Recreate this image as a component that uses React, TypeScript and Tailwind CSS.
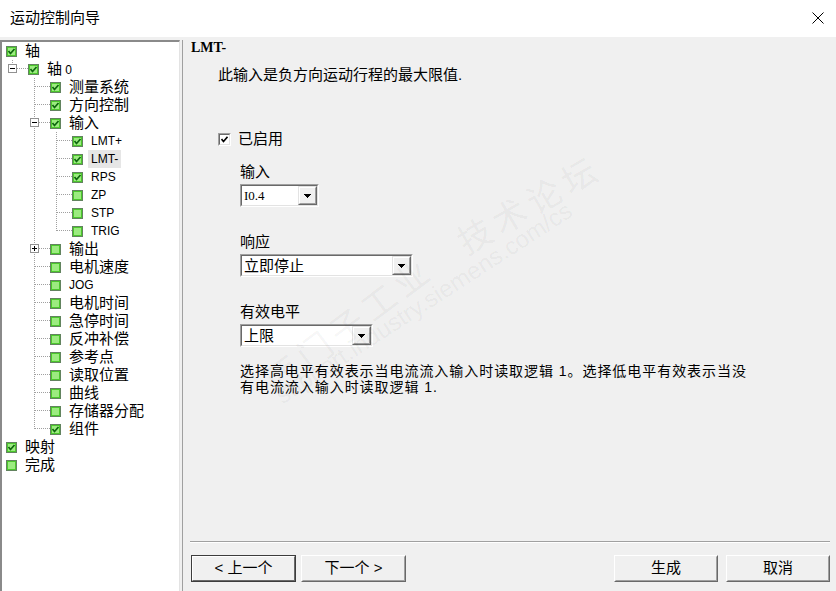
import React from "react"

type Guide = " " | "|" | "T" | "L"

type TreeRow = {
  label: React.ReactNode
  guides: Guide[]
  checked: boolean
  expander?: "-" | "+"
  latin?: boolean
  selected?: boolean
}

const rows: TreeRow[] = [
  { label: "轴", guides: [], checked: true },
  {
    label: (
      <>
        轴<span className="text-[12px]"> 0</span>
      </>
    ),
    guides: ["L"],
    checked: true,
    expander: "-",
  },
  { label: "测量系统", guides: [" ", "T"], checked: true },
  { label: "方向控制", guides: [" ", "T"], checked: true },
  { label: "输入", guides: [" ", "T"], checked: true, expander: "-" },
  { label: "LMT+", guides: [" ", "|", "T"], checked: true, latin: true },
  { label: "LMT-", guides: [" ", "|", "T"], checked: true, latin: true, selected: true },
  { label: "RPS", guides: [" ", "|", "T"], checked: true, latin: true },
  { label: "ZP", guides: [" ", "|", "T"], checked: false, latin: true },
  { label: "STP", guides: [" ", "|", "T"], checked: false, latin: true },
  { label: "TRIG", guides: [" ", "|", "L"], checked: false, latin: true },
  { label: "输出", guides: [" ", "T"], checked: false, expander: "+" },
  { label: "电机速度", guides: [" ", "T"], checked: false },
  { label: "JOG", guides: [" ", "T"], checked: false, latin: true },
  { label: "电机时间", guides: [" ", "T"], checked: false },
  { label: "急停时间", guides: [" ", "T"], checked: false },
  { label: "反冲补偿", guides: [" ", "T"], checked: false },
  { label: "参考点", guides: [" ", "T"], checked: false },
  { label: "读取位置", guides: [" ", "T"], checked: false },
  { label: "曲线", guides: [" ", "T"], checked: false },
  { label: "存储器分配", guides: [" ", "T"], checked: false },
  { label: "组件", guides: [" ", "L"], checked: true },
  { label: "映射", guides: [], checked: true },
  { label: "完成", guides: [], checked: false },
]

const GuideCell: React.FC<{ kind: Guide; last: boolean; expander?: "-" | "+" }> = ({
  kind,
  last,
  expander,
}) => {
  const w = last ? 26 : 22
  const dot = { stroke: "#a0a0a0", strokeDasharray: "1 1" }
  return (
    <svg width={w} height={18} shapeRendering="crispEdges" className="shrink-0">
      {(kind === "|" || kind === "T") && <line x1={10.5} y1={0} x2={10.5} y2={18} {...dot} />}
      {kind === "L" && <line x1={10.5} y1={0} x2={10.5} y2={9} {...dot} />}
      {last && (kind === "T" || kind === "L") && (
        <line x1={11} y1={8.5} x2={w} y2={8.5} {...dot} />
      )}
      {last && expander && (
        <>
          <rect x={6.5} y={4.5} width={8} height={8} fill="#fff" stroke="#919191" />
          <line x1={8} y1={8.5} x2={13} y2={8.5} stroke="#000" />
          {expander === "+" && <line x1={10.5} y1={6} x2={10.5} y2={11} stroke="#000" />}
        </>
      )}
    </svg>
  )
}

const TreeCheck: React.FC<{ checked: boolean }> = ({ checked }) => (
  <svg width={11} height={11} className="shrink-0" shapeRendering="crispEdges">
    <rect x={0.5} y={0.5} width={10} height={10} fill="#4cc82c" stroke="#62835f" />
    <rect x={2} y={2} width={7} height={7} fill="#9ceb80" />
    {checked && (
      <path
        d="M2.5 5 L4.5 7.5 L8.5 3"
        stroke="#0d660d"
        strokeWidth={1.7}
        fill="none"
        shapeRendering="auto"
      />
    )}
  </svg>
)

const Sunken: React.FC<{ className?: string; children: React.ReactNode }> = ({
  className,
  children,
}) => (
  <div
    className={`border border-t-[#a0a0a0] border-l-[#a0a0a0] border-b-white border-r-white ${className ?? ""}`}
  >
    <div className="h-full w-full border border-t-[#696969] border-l-[#696969] border-b-[#e3e3e3] border-r-[#e3e3e3]">
      {children}
    </div>
  </div>
)

const Combo: React.FC<{ className: string; text: string; latin?: boolean }> = ({
  className,
  text,
  latin,
}) => (
  <Sunken className={`h-[23px] ${className}`}>
    <div className="flex h-full bg-white">
      <div
        className={`flex-1 pl-[2px] leading-[19px] text-black ${
          latin ? "text-[13px] font-['Liberation_Serif',serif]" : "text-[15px]"
        }`}
      >
        {text}
      </div>
      <div className="h-full w-[19px] border border-t-[#e3e3e3] border-l-[#e3e3e3] border-b-[#696969] border-r-[#696969]">
        <div className="flex h-full w-full items-center justify-center border border-t-white border-l-white border-b-[#a0a0a0] border-r-[#a0a0a0] bg-[#f0f0f0]">
          <svg width={7} height={4} shapeRendering="crispEdges">
            <path d="M0 0 H7 L3.5 4 Z" fill="#000" />
          </svg>
        </div>
      </div>
    </div>
  </Sunken>
)

const Button: React.FC<{ className?: string; focused?: boolean; children: React.ReactNode }> = ({
  className,
  focused,
  children,
}) => (
  <div
    className={`h-[27px] ${
      focused ? "border border-[#3c3c3c]" : "border border-t-white border-l-white border-b-[#696969] border-r-[#696969]"
    } ${className ?? ""}`}
  >
    <div
      className={`flex h-full w-full items-center justify-center bg-[#f0f0f0] text-[15px] ${
        focused
          ? "border border-t-white border-l-white border-b-[#696969] border-r-[#696969]"
          : "border border-t-[#f0f0f0] border-l-[#f0f0f0] border-b-[#a0a0a0] border-r-[#a0a0a0]"
      }`}
    >
      {children}
    </div>
  </div>
)

export default function App() {
  return (
    <div className="relative flex h-[591px] w-[836px] flex-col overflow-hidden bg-[#f0f0f0] font-['Liberation_Sans','Noto_Sans_CJK_SC',sans-serif] text-black">
      {/* title bar */}
      <div className="flex h-[37px] shrink-0 items-center justify-between bg-white pl-[10px] pr-[12px]">
        <span className="text-[15px]">运动控制向导</span>
        <svg width={12} height={12} className="mb-[2px]">
          <path d="M0.5 0.5 L11.5 11.5 M11.5 0.5 L0.5 11.5" stroke="#000" strokeWidth={1} />
        </svg>
      </div>

      <div className="flex flex-1 pt-[3px]">
        {/* tree */}
        <div className="w-[180px] shrink-0 border-l-2 border-t-2 border-l-[#8a8a8a] border-t-[#8a8a8a] border-r border-r-[#e3e3e3] bg-white">
          {rows.map((row, i) => (
            <div key={i} className="flex h-[18px] items-center">
              {row.guides.length === 0 && <div className="w-[4px] shrink-0" />}
              {row.guides.map((g, gi) => (
                <GuideCell
                  key={gi}
                  kind={g}
                  last={gi === row.guides.length - 1}
                  expander={row.expander}
                />
              ))}
              <TreeCheck checked={row.checked} />
              <span
                className={`ml-[5px] px-[3px] whitespace-nowrap leading-[18px] ${
                  row.latin ? "text-[12px]" : "text-[15px]"
                } ${row.selected ? "bg-[#e6e6e6]" : ""}`}
              >
                {row.label}
              </span>
            </div>
          ))}
        </div>

        {/* right page */}
        <div className="ml-[2px] flex flex-1 flex-col border-l border-l-[#a0a0a0]">
          <div className="flex-1 pl-[8px]">
            <div className="text-[14px] font-bold leading-[15px] font-['Liberation_Serif',serif]">
              LMT-
            </div>
            <div className="ml-[27px] mt-[11px] text-[15px] leading-[18px]">
              此输入是负方向运动行程的最大限值.
            </div>
            <div className="ml-[27px] mt-[46px] flex h-[18px] items-center">
              <Sunken className="h-[13px] w-[13px]">
                <div className="flex h-full w-full items-center justify-center bg-white">
                  <svg width={7} height={7}>
                    <path d="M0.5 3 L2.5 5.5 L6.5 0.8" stroke="#000" strokeWidth={1.6} fill="none" />
                  </svg>
                </div>
              </Sunken>
              <span className="ml-[7px] text-[15px] leading-[18px]">已启用</span>
            </div>

            <div className="ml-[49px]">
              <div className="mt-[15px] text-[15px] leading-[18px]">输入</div>
              <Combo className="mt-[3px] w-[79px]" text="I0.4" latin />
              <div className="mt-[26px] text-[15px] leading-[18px]">响应</div>
              <Combo className="mt-[3px] w-[173px]" text="立即停止" />
              <div className="mt-[26px] text-[15px] leading-[18px]">有效电平</div>
              <Combo className="mt-[3px] w-[133px]" text="上限" />
              <p className="mt-[16px] text-[14px] leading-[16px] tracking-[0.95px]">
                选择高电平有效表示当电流流入输入时读取逻辑 1。选择低电平有效表示当没
                <br />
                有电流流入输入时读取逻辑 1.
              </p>
            </div>
          </div>

          {/* footer */}
          <div className="h-[50px] shrink-0">
            <div className="ml-[7px] mr-[6px] border-t border-b border-t-[#a0a0a0] border-b-white" />
            <div className="mt-[12px] flex pl-[8px] pr-[6px]">
              <Button className="w-[105px]" focused>
                &lt; 上一个
              </Button>
              <Button className="ml-[5px] w-[105px]">下一个 &gt;</Button>
              <Button className="ml-auto w-[104px]">生成</Button>
              <Button className="ml-[8px] w-[104px]">取消</Button>
            </div>
          </div>
        </div>
      </div>

      {/* watermark */}
      <div className="pointer-events-none absolute left-[250px] top-[300px] -rotate-[37deg] text-[34px] tracking-[6px] text-[#000]/[0.05] whitespace-nowrap">
        西门子工业
      </div>
      <div className="pointer-events-none absolute left-[450px] top-[180px] -rotate-[30deg] text-[34px] tracking-[6px] text-[#000]/[0.05] whitespace-nowrap">
        技术论坛
      </div>
      <div className="pointer-events-none absolute left-[250px] top-[285px] -rotate-[33deg] text-[24px] text-[#000]/[0.05] whitespace-nowrap">
        support.industry.siemens.com/cs
      </div>
    </div>
  )
}
